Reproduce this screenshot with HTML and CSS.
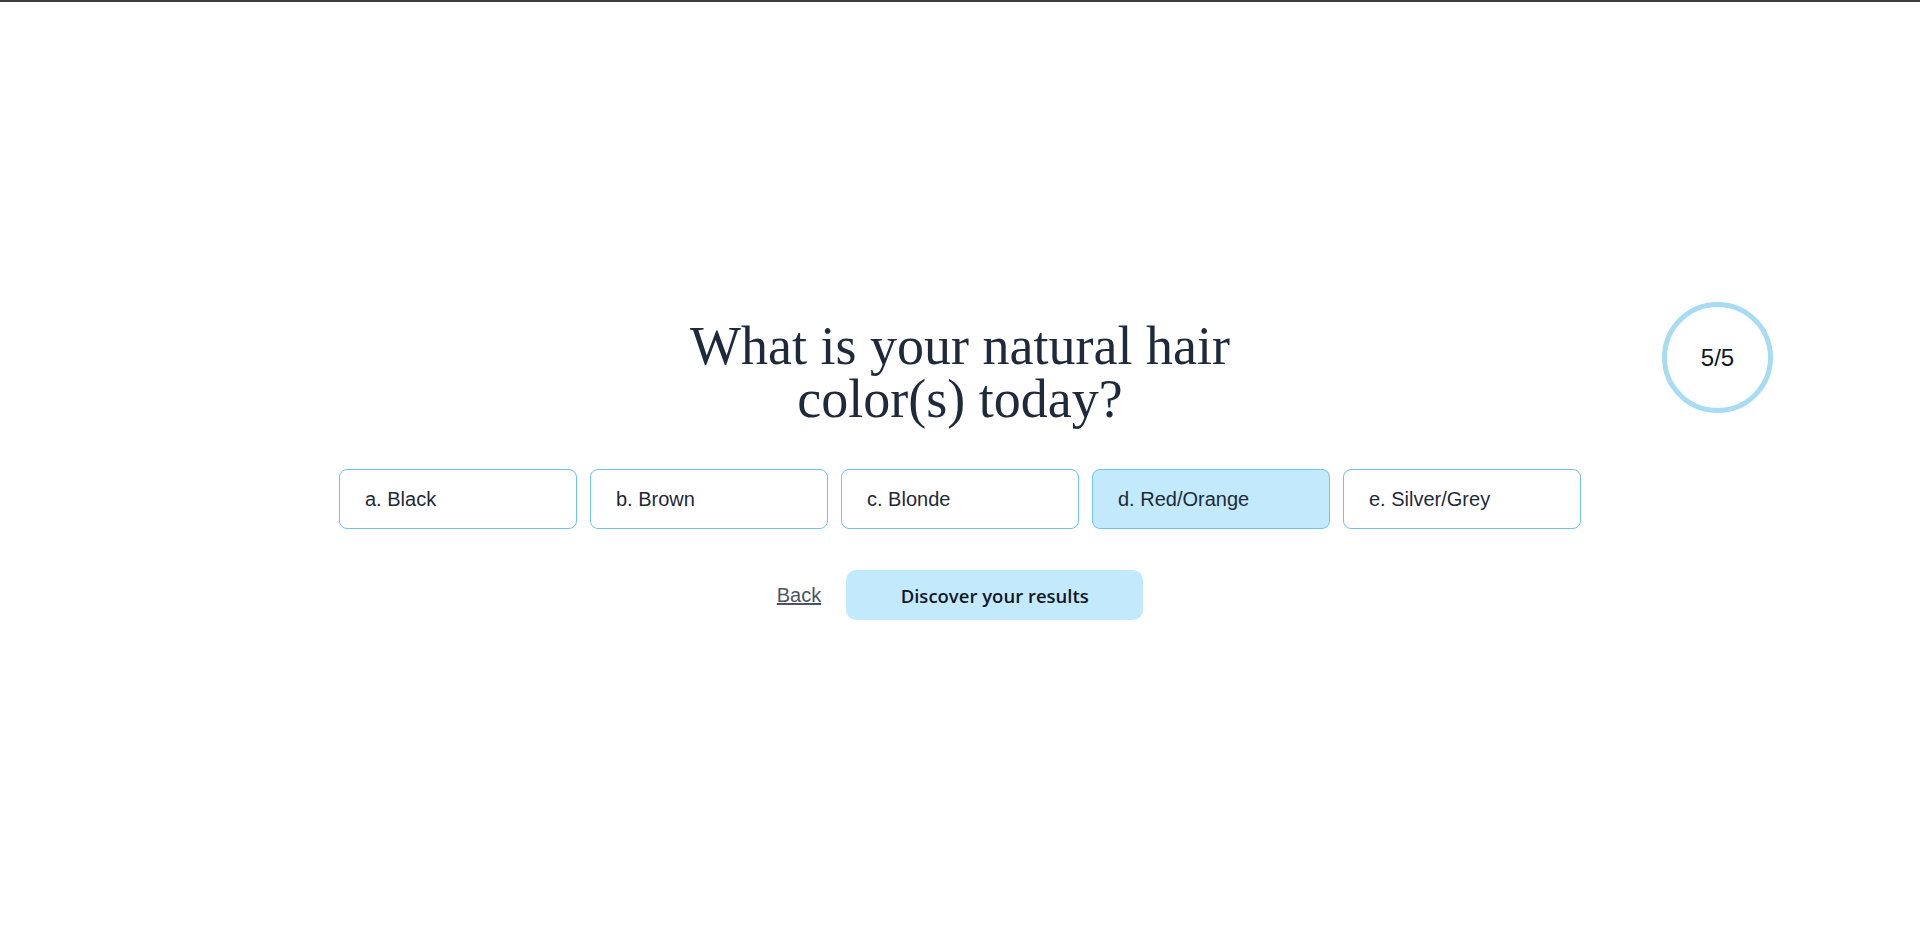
FILE: index.html
```html
<!DOCTYPE html>
<html lang="en">
<head>
<meta charset="utf-8">
<title>Quiz</title>
<link rel="stylesheet" href="styles.css">
</head>
<body>
<div class="topbar"></div>
<main class="quiz">
  <div class="progress">5/5</div>
  <h1 class="question">What is your natural hair color(s) today?</h1>
  <div class="options">
    <button class="option">a. Black</button>
    <button class="option">b. Brown</button>
    <button class="option">c. Blonde</button>
    <button class="option selected">d. Red/Orange</button>
    <button class="option">e. Silver/Grey</button>
  </div>
  <div class="actions">
    <a class="back" href="#">Back</a>
    <button class="submit">Discover your results</button>
  </div>
</main>
</body>
</html>
```

FILE: styles.css
```css
html, body {
  margin: 0;
  padding: 0;
  background: #ffffff;
}
body {
  font-family: "Liberation Sans", Arial, sans-serif;
  color: #1e293b;
  height: 935px;
  overflow: hidden;
}
.topbar {
  height: 2px;
  background: #3d3d3d;
}
.quiz {
  position: relative;
  display: flex;
  flex-direction: column;
  align-items: center;
  padding-top: 318px;
}
.progress {
  position: absolute;
  top: 300px;
  left: 1662px;
  width: 101px;
  height: 101px;
  border: 5px solid #a6dcf4;
  border-radius: 50%;
  display: flex;
  align-items: center;
  justify-content: center;
  font-size: 24px;
  color: #111827;
}
.question {
  margin: 0;
  max-width: 600px;
  text-align: center;
  font-family: "Liberation Serif", "Times New Roman", serif;
  font-weight: 400;
  font-size: 54px;
  line-height: 53px;
  color: #1e293b;
}
.options {
  display: flex;
  gap: 13px;
  margin-top: 43px;
}
.option {
  width: 238px;
  height: 60px;
  box-sizing: border-box;
  border: 1px solid #6cc4ef;
  border-radius: 8px;
  background: #ffffff;
  padding: 0 0 0 25px;
  text-align: left;
  font-family: "Liberation Sans", Arial, sans-serif;
  font-size: 20px;
  color: #1f2937;
  cursor: pointer;
}
.option.selected {
  background: #c3eafc;
}
.actions {
  display: flex;
  align-items: center;
  gap: 25px;
  margin-top: 41px;
}
.back {
  font-family: "Liberation Sans", Arial, sans-serif;
  font-size: 20px;
  color: #4b5563;
  text-decoration: underline;
}
.submit {
  width: 297px;
  height: 50px;
  border: none;
  border-radius: 10px;
  background: #c3eafc;
  font-family: "Open Sans", "Noto Sans", sans-serif;
  font-weight: 600;
  font-size: 18.5px;
  color: #111827;
  cursor: pointer;
}
```
